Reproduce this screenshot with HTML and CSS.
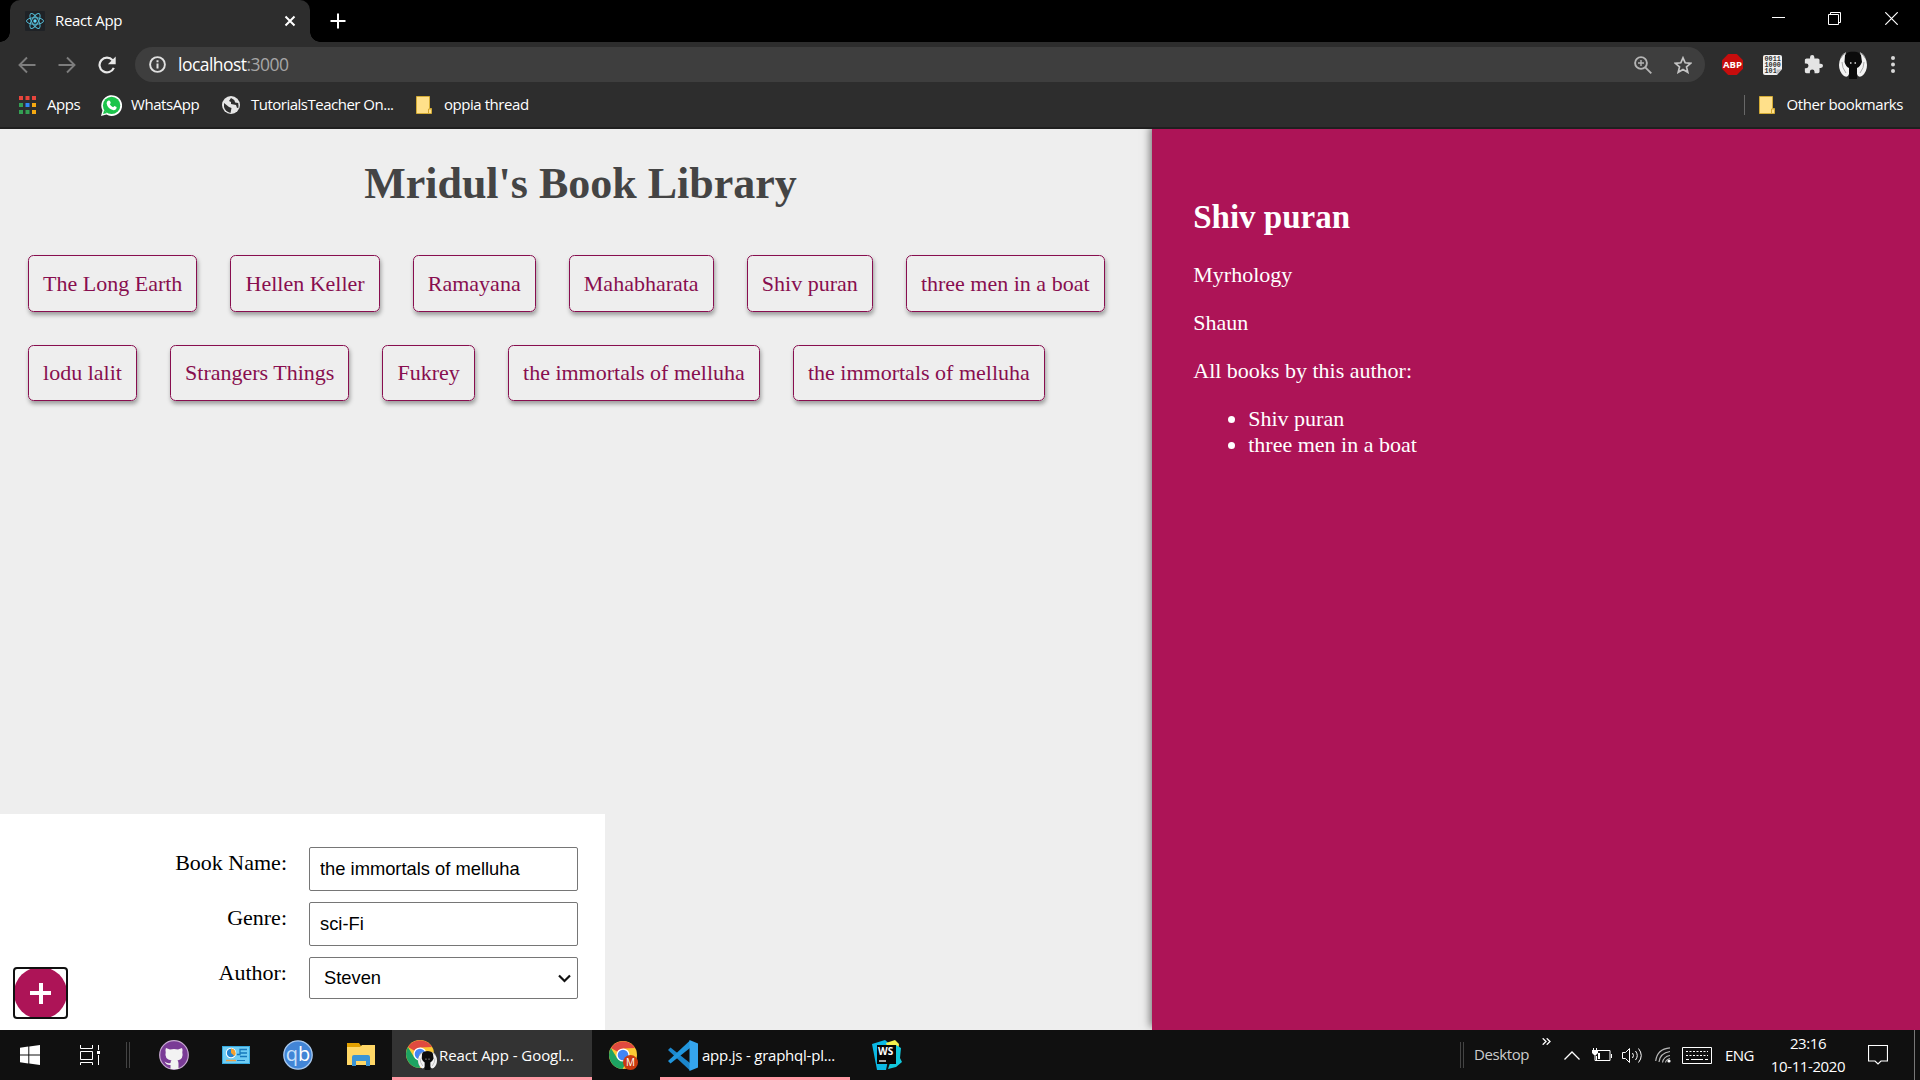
FILE: index.html
```html
<!DOCTYPE html>
<html lang="en">
<head>
<meta charset="utf-8">
<title>React App</title>
<link rel="stylesheet" href="styles.css">
</head>
<body>
<svg class="defs" width="0" height="0" aria-hidden="true">
  <symbol id="chrome" viewBox="0 0 28 28">
    <circle cx="14" cy="14" r="14" fill="#fcc934"/>
    <path d="M14 14 L2 7 A14 14 0 0 1 26.1 7 L14 7.500Z" fill="#e04a3f"/>
    <path d="M1.900 7 A14 14 0 0 0 13.500 28 L20 17 L8 17Z" fill="#1da462"/>
    <circle cx="14" cy="14" r="6.600" fill="#fff"/>
    <circle cx="14" cy="14" r="5.300" fill="#4285f4"/>
  </symbol>
  <symbol id="avatar" viewBox="0 0 28 28">
    <circle cx="14" cy="14" r="14" fill="#2b2b2b"/>
    <path d="M7 2Q0 6 0 14q0 7 5 11 4 2 5-2L10 16 6 11ZM21 2q7 4 7 12 0 7-5 11-4 2-5-2l0-7 4-5Z" fill="#f3f3f3"/>
    <path d="M6 4Q9 0 14 .8 19 0 22 4L23 11Q21 16 18 17V28H10V17Q7 16 5.500 11Z" fill="#0b0b0b"/>
    <path d="M3 11q0 6 4 11M25 11q0 6-4 11M7 1.500Q3 3 2 7M21 1.500Q25 3 26 7" fill="none" stroke="#aaa"/>
    <path d="M11 12h1.500M15.500 12h1.500" stroke="#ddd" stroke-width="1.300"/>
  </symbol>
  <symbol id="folder" viewBox="0 0 16 18">
    <path d="M.5.5h13v12h2v5H.5Z" fill="#ffe08a" stroke="#d3ab35"/>
    <path d="M12.500 17v-4h2.500" fill="none" stroke="#d3a52c"/>
  </symbol>
</svg>

<header class="browser">
  <div class="tab-strip">
    <div class="tab">
      <svg class="tab-icon" width="20" height="20" viewBox="0 0 20 20"><rect width="20" height="20" rx="1" fill="#1f2226"/><g fill="none" stroke="#53b9d3"><ellipse cx="10" cy="10" rx="8.500" ry="3.300"/><ellipse cx="10" cy="10" rx="8.500" ry="3.300" transform="rotate(60 10 10)"/><ellipse cx="10" cy="10" rx="8.500" ry="3.300" transform="rotate(120 10 10)"/></g><circle cx="10" cy="10" r="1.700" fill="#61dafb"/></svg>
      <span class="tab-title">React App</span>
      <svg class="tab-close" width="12" height="12" viewBox="0 0 12 12"><path d="M1.500 1.500l9 9M10.500 1.500l-9 9" stroke="#fff" stroke-width="2"/></svg>
    </div>
    <svg class="new-tab" width="16" height="16" viewBox="0 0 16 16"><path d="M8 .5v15M.5 8h15" stroke="#fff" stroke-width="2"/></svg>
    <div class="window-buttons">
      <svg width="13" height="13" viewBox="0 0 13 13"><path d="M0 5.500h13" stroke="#fff"/></svg>
      <svg width="13" height="13" viewBox="0 0 13 13"><path d="M.5 2.500h10v10H.5zM2.500 2.500v-2h10v10h-2" fill="none" stroke="#fff"/></svg>
      <svg width="13" height="13" viewBox="0 0 13 13"><path d="M.3.3l12.400 12.400M12.700.3L.3 12.700" stroke="#fff" stroke-width="1.200"/></svg>
    </div>
  </div>

  <div class="toolbar">
    <div class="nav-buttons">
      <svg width="18" height="18" viewBox="0 0 18 18"><path d="M17.500 9H1.500M9 1.500L1.500 9 9 16.500" fill="none" stroke="#7d7d7d" stroke-width="1.900"/></svg>
      <svg width="18" height="18" viewBox="0 0 18 18"><path d="M.5 9h16M9 1.500L16.500 9 9 16.500" fill="none" stroke="#7d7d7d" stroke-width="1.900"/></svg>
      <svg width="18" height="18" viewBox="0 0 18 18"><path d="M15.800 11.800A7.400 7.400 0 1 1 14.600 4.200" fill="none" stroke="#e8e8e8" stroke-width="2.200"/><path d="M17.700.5v7.800H9.900Z" fill="#e8e8e8"/></svg>
    </div>
    <div class="address-bar">
      <svg width="17" height="17" viewBox="0 0 17 17"><circle cx="8.500" cy="8.500" r="7.400" fill="none" stroke="#e0e0e0" stroke-width="1.900"/><path d="M8.500 7.500v5M8.500 4.300v1.900" stroke="#e0e0e0" stroke-width="2"/></svg>
      <span class="url">localhost<span class="port">:3000</span></span>
      <div class="address-actions">
        <svg width="18" height="18" viewBox="0 0 18 18"><g fill="none" stroke="#b5b5b5" stroke-width="1.900"><circle cx="7" cy="7" r="5.900"/><path d="M11.300 11.300l6 6"/><path d="M7 4v6M4 7h6" stroke-width="1.400"/></g></svg>
        <svg width="18" height="18" viewBox="0 0 18 18"><path d="M9 1.800l2.200 5 5.500.5-4.200 3.600 1.300 5.400L9 13.400l-4.800 2.900 1.300-5.400L1.300 7.300l5.500-.5Z" fill="none" stroke="#c4c4c4" stroke-width="1.700"/></svg>
      </div>
    </div>
    <div class="extensions">
      <svg width="21" height="21" viewBox="0 0 21 21"><path d="M6.200 0h8.600L21 6.200v8.600L14.800 21H6.200L0 14.800V6.200Z" fill="#c70d0d"/><text class="abp" x="10.500" y="14.200" text-anchor="middle">ABP</text></svg>
      <svg width="19" height="20" viewBox="0 0 19 20"><path d="M2 0h15q2 0 2 2v12l-5 6H2q-2 0-2-2V2q0-2 2-2Z" fill="#efefef"/><g class="bits"><text x="1.500" y="6.300">0011</text><text x="1.500" y="12.300">1000</text><text x="1.500" y="18.300">101</text></g><path d="M13.500 19.500v-5H19" fill="#bbb"/></svg>
      <svg width="19" height="19" viewBox="1 1 22 22"><path d="M20.500 11H19V7c0-1.100-.9-2-2-2h-4V3.500a2.500 2.500 0 0 0-5 0V5H4c-1.100 0-2 .9-2 2v3.800h1.500a2.700 2.700 0 0 1 0 5.400H2V20c0 1.100.9 2 2 2h3.800v-1.500a2.700 2.700 0 0 1 5.400 0V22H17c1.100 0 2-.9 2-2v-4h1.500a2.500 2.500 0 0 0 0-5Z" fill="#e4e4e4"/></svg>
      <svg width="28" height="28"><use href="#avatar"/></svg>
      <svg width="4" height="17" viewBox="0 0 4 17"><g fill="#d8d8d8"><circle cx="2" cy="2" r="2"/><circle cx="2" cy="8.500" r="2"/><circle cx="2" cy="15" r="2"/></g></svg>
    </div>
  </div>

  <nav class="bookmarks">
    <a class="bookmark apps"><svg width="17" height="18" viewBox="0 0 17 18"><path d="M0 0h4v4H0zM6.500 0h4v4h-4zM13 0h4v4h-4z" fill="#e8453c"/><path d="M0 7h4v4H0zM0 14h4v4H0zM6.500 14h4v4h-4z" fill="#34a053"/><path d="M6.500 7h4v4h-4z" fill="#2f86f6"/><path d="M13 7h4v4h-4zM13 14h4v4h-4z" fill="#f5a911"/></svg><span>Apps</span></a>
    <a class="bookmark whatsapp"><svg width="21" height="21" viewBox="0 0 21 21"><path d="M0 21l1.500-5.500A10.400 10.400 0 1 1 5.500 19.600Z" fill="#fff"/><circle cx="10.600" cy="10.400" r="8.700" fill="#1cc44b"/><path d="M2 19l1.200-4 3 3Z" fill="#1cc44b"/><path d="M7.400 5.500l1.500.2.900 2.300-1 1.300q1.200 2.200 3.300 3l1.300-1.400 2.200 1.100q.2 3-3 3.200Q6.500 14 5.600 8.300q.2-2 1.800-2.800Z" fill="#fff"/></svg><span>WhatsApp</span></a>
    <a class="bookmark tutorials"><svg width="18" height="18" viewBox="0 0 18 18"><circle cx="9" cy="9" r="9" fill="#e6e6e6"/><path d="M2 7l5 4 2.500 1-1 5Q3 15.500 2 11ZM9 2l-2 3 2 1v2l5 1 1 3 1.500-.5L16 13q1-3 .2-6l-3-.5-1-2.500Z" fill="#2e2e2e"/></svg><span>TutorialsTeacher On...</span></a>
    <a class="bookmark oppia"><svg width="16" height="18"><use href="#folder"/></svg><span>oppia thread</span></a>
    <a class="bookmark other"><svg width="16" height="18"><use href="#folder"/></svg><span>Other bookmarks</span></a>
  </nav>
</header>

<main class="app">
  <section class="library">
    <h1>Mridul's Book Library</h1>
    <ul class="book-list">
      <li>The Long Earth</li><li>Hellen Keller</li><li>Ramayana</li><li>Mahabharata</li><li>Shiv puran</li><li>three men in a boat</li><li>lodu lalit</li><li>Strangers Things</li><li>Fukrey</li><li>the immortals of melluha</li><li>the immortals of melluha</li>
    </ul>
    <form class="add-book">
      <button class="add-button" type="button" aria-label="Add book"><span></span></button>
      <div class="field"><label for="name">Book Name:</label><input id="name" type="text" value="the immortals of melluha"></div>
      <div class="field"><label for="genre">Genre:</label><input id="genre" type="text" value="sci-Fi"></div>
      <div class="field"><label>Author:</label><div class="select"><span>Steven</span><svg width="13" height="9" viewBox="0 0 13 9"><path d="M1 1.500l5.500 5.500L12 1.500" fill="none" stroke="#111" stroke-width="2.200"/></svg></div></div>
    </form>
  </section>
  <aside class="details">
    <h2>Shiv puran</h2>
    <p>Myrhology</p>
    <p>Shaun</p>
    <p>All books by this author:</p>
    <ul><li>Shiv puran</li><li>three men in a boat</li></ul>
  </aside>
</main>

<footer class="taskbar">
  <div class="slot start"><svg width="20" height="20" viewBox="0 0 20 20"><path d="M0 2.800L8.300 1.600V9.500H0zM9.300 1.400L20 0v9.500H9.300zM0 10.500h8.300v7.900L0 17.200zM9.300 10.500H20V20L9.300 18.600z" fill="#fff"/></svg></div>
  <div class="slot task-view"><svg width="20" height="20" viewBox="0 0 20 20"><path d="M.5 0v3.500h12V0M.5 6.500h12v8H.5zM.5 20v-2.500h12V20M18.500 0v5M18.500 10v10" fill="none" stroke="#fff"/><path d="M17 6h3v3h-3z" fill="#fff"/></svg></div>
  <div class="grip"></div>
  <div class="slot github"><svg width="30" height="30" viewBox="0 0 30 30"><circle cx="15" cy="15" r="14.300" fill="#7a3b96" stroke="#c7a8d2" stroke-width="1.200"/><path d="M7 8l4 1.500q4-1 8 0L23 8q1 2 .3 4.300Q25 19 18.500 20.500q1 1 1 3V29h-8v-4q-4 .5-6-3.500 3 2.500 6 1.500 0-2 1-2.500Q5 19 6.700 12.300 6 10 7 8Z" fill="#f2f2f2"/></svg></div>
  <div class="slot control"><svg width="28" height="18" viewBox="0 0 28 18"><rect x=".5" y=".5" width="27" height="17" fill="#6fcdf4" stroke="#35a9df"/><circle cx="9" cy="7" r="5.200" fill="#fff"/><circle cx="9" cy="7" r="4.200" fill="#2584cf"/><path d="M9 7V2.500A4.500 4.500 0 0 1 12.500 10Z" fill="#f5a12c"/><path d="M15 8.500h3v-5h7M18 7h7M18 10.500h7" fill="none" stroke="#1678bc" stroke-width="1.300"/><path d="M4 14.500h10" stroke="#f0a044" stroke-width="1.500"/><path d="M15 14.500h8" stroke="#1678bc"/></svg></div>
  <div class="slot qb"><svg width="30" height="30" viewBox="0 0 30 30"><circle cx="15" cy="15" r="14.200" fill="#4285d6" stroke="#a9c9ee" stroke-width="1.300"/><text class="qb-text" x="15" y="20.500" text-anchor="middle"><tspan fill="#c8e0fa">q</tspan><tspan fill="#fff">b</tspan></text></svg></div>
  <div class="slot explorer"><svg width="28" height="24" viewBox="0 0 28 24"><path d="M0 0h12l2 3H28v4H0z" fill="#e2a000"/><path d="M0 4h13l2-2h13v20H0z" fill="#ffd766"/><path d="M5 23V14q0-2 2-2h14q2 0 2 2v9h-4v-5H9v5z" fill="#3b94d5"/></svg></div>
  <div class="task active"><svg width="31" height="32" viewBox="0 0 31 32"><use href="#chrome" y="1" width="28" height="28"/><use href="#avatar" x="12" y="12" width="19" height="19"/></svg><span>React App - Googl...</span></div>
  <div class="slot chrome-m"><svg width="29" height="29" viewBox="0 0 29 29"><use href="#chrome" width="28" height="28"/><circle cx="21.500" cy="21.500" r="7.500" fill="#c93a10"/><text class="badge-m" x="21.500" y="25" text-anchor="middle">M</text></svg></div>
  <div class="task code"><svg width="30" height="31" viewBox="0 0 30 31"><path d="M0 10l2.500-2.500L22 23v7.500z" fill="#1c86cc"/><path d="M0 21l2.500 2.500L22 8V.5z" fill="#2196dd"/><path d="M21.500 0L30 3.500v24L21.500 31z" fill="#35a5ee"/></svg><span>app.js - graphql-pl...</span></div>
  <div class="slot webstorm"><svg width="30" height="30" viewBox="0 0 30 30"><path d="M0 4l13-4 6 5-5 25H5z" fill="#0bb9e5"/><path d="M14 3l9-3 4 4-1 9-10-4z" fill="#f5f04d"/><path d="M24 5l5 3-1 10 2 4-6 5-8 2z" fill="#12c8dc"/><path d="M5 5h19v19H5z" fill="#050505"/><text class="ws" x="6" y="15">WS</text><path d="M7 21h7" stroke="#fff" stroke-width="1.300"/></svg></div>
  <div class="tray">
    <div class="grip"></div>
    <span class="desktop">Desktop</span>
    <svg class="more" width="9" height="7" viewBox="0 0 9 7"><path d="M.7.300L4 3.500.7 6.700M4.700.300L8 3.500 4.700 6.700" fill="none" stroke="#fff" stroke-width="1.300"/></svg>
    <svg class="up" width="16" height="9" viewBox="0 0 16 9"><path d="M.5 8.500L8 1l7.500 7.500" fill="none" stroke="#fff" stroke-width="1.300"/></svg>
    <svg class="battery" width="20" height="14" viewBox="0 0 20 14"><path d="M6 2.500h12v10H4.500V8M19.500 6v4M1.500 0v2M4.500 0v2M3 7v5.500h2" fill="none" stroke="#fff"/><path d="M0 2h6v3L4 7H2L0 5zM6 5h2v6H6z" fill="#fff"/></svg>
    <svg class="volume" width="21" height="17" viewBox="0 0 21 17"><path d="M.5 5.500h3l4-4v14l-4-4h-3zM10.500 6q2 2.500 0 5M13.500 4q3.500 4.500 0 9M16.500 1.500q5.500 7 0 14" fill="none" stroke="#fff"/></svg>
    <svg class="wifi" width="16" height="16" viewBox="0 0 16 16"><g fill="none" stroke="#b7b7b7" stroke-width="1.200"><path d="M.7 14Q2 2 15 .8M4 15Q5 6 15 4.500M7.500 15.500q1-6 7.500-7M10.500 15.500q.5-3 4.500-4"/></g><circle cx="14" cy="14" r="1.600" fill="#fff"/></svg>
    <svg class="keyboard" width="30" height="17" viewBox="0 0 30 17"><path d="M.5.5h29v16H.5z" fill="none" stroke="#fff"/><path d="M4 4.500h22M4 8.500h22" stroke="#fff" stroke-dasharray="2 1.500"/><path d="M4 12.500h3M9 12.500h12M23 12.500h3" stroke="#fff"/></svg>
    <span class="lang">ENG</span>
    <div class="clock"><span>23:16</span><span>10-11-2020</span></div>
    <svg class="notify" width="20" height="20" viewBox="0 0 20 20"><path d="M.5.5h19v15.500H13L10 19 7 16H.5z" fill="none" stroke="#fff" stroke-width="1.200"/></svg>
    <div class="show-desktop"></div>
  </div>
</footer>
</body>
</html>
```
FILE: styles.css
```css
* { box-sizing: border-box; }
body {
  margin: 0;
  width: 1920px;
  height: 1080px;
  overflow: hidden;
  display: flex;
  flex-direction: column;
  font-family: "Liberation Serif", "Times New Roman", serif;
  font-size: 22px;
}
svg { display: block; flex: none; }
.defs { position: absolute; }

/* Browser window */
.browser {
  height: 129px;
  flex: none;
  background: #2d2d2d;
  border-bottom: 2px solid #1f1f1f;
  color: #fff;
  font-family: "Open Sans", "Noto Sans", sans-serif;
  font-size: 15px;
}
.tab-strip { height: 42px; background: #000; display: flex; align-items: flex-start; padding-left: 10px; }
.tab {
  width: 300px;
  height: 42px;
  display: flex;
  align-items: center;
  padding: 0 14px 0 15px;
  background: #2d2d2d;
  border-radius: 10px 10px 0 0;
  position: relative;
}
.tab::before, .tab::after {
  content: "";
  position: absolute;
  bottom: 0;
  width: 10px;
  height: 10px;
}
.tab::before { left: -10px; background: radial-gradient(circle at 0 0, #000 9.500px, #2d2d2d 10px); }
.tab::after { right: -10px; background: radial-gradient(circle at 100% 0, #000 9.500px, #2d2d2d 10px); }
.tab-title { margin: 0 0 2px 10px; letter-spacing: -.35px; }
.tab-close { margin-left: auto; }
.new-tab { margin: 13px 0 0 20px; }
.window-buttons { margin: 12px 22px 0 auto; display: flex; gap: 44px; }
.window-buttons svg:first-child { margin-right: -1px; }

.toolbar { height: 45px; display: flex; align-items: center; padding-right: 25px; }
.nav-buttons { display: flex; gap: 22px; padding-left: 18px; width: 135px; flex: none; }
.address-bar {
  width: 1570px;
  height: 35px;
  border-radius: 18px;
  background: #3e3e3e;
  display: flex;
  align-items: center;
  padding: 0 13px 0 14px;
}
.url { margin: 0 0 1px 12px; font-size: 17.500px; letter-spacing: -.53px; }
.port { color: #a6a6a6; }
.address-actions { margin-left: auto; display: flex; gap: 22px; }
.extensions { margin-left: auto; display: flex; align-items: center; gap: 20px; }
.extensions svg:nth-child(3) { margin: 0 -4px 0 2px; }
.extensions svg:nth-child(5) { margin-left: 4px; }
.abp { font: bold 9.500px "Open Sans", sans-serif; fill: #fff; }
.bits { font: bold 6.800px "Liberation Mono", monospace; fill: #333; }

.bookmarks { height: 36px; display: flex; align-items: center; }
.bookmark { display: flex; align-items: center; letter-spacing: -.45px; white-space: nowrap; }
.bookmark span { margin-bottom: 2px; }
.apps { margin-left: 19px; width: 82px; gap: 11px; }
.whatsapp { width: 121px; gap: 9px; }
.tutorials { width: 194px; gap: 11px; letter-spacing: -.5px; }
.oppia, .other { gap: 12px; }
.other { margin: 0 17px 0 auto; padding-left: 15px; position: relative; }
.other::before { content: ""; position: absolute; left: 0; width: 1px; height: 20px; background: #686868; }

/* Library page */
.app { height: 901px; display: flex; flex: none; background: #eee; overflow: hidden; }
.library { width: 1152px; display: flex; flex-direction: column; }
h1 { margin: 30px 0 0 9px; line-height: 50px; font-size: 44px; color: #444; text-align: center; }
.book-list {
  list-style: none;
  margin: 0;
  padding: 46px 0 0 11.500px;
  display: flex;
  flex-wrap: wrap;
  align-content: flex-start;
}
.book-list li {
  margin: 0 16.500px 33px;
  padding: 13.750px 14.080px;
  line-height: 27px;
  border: 1px solid #880e4f;
  border-radius: 5.500px;
  color: #880e4f;
  box-shadow: 1px 3px 4px rgba(0, 0, 0, .35);
}
.add-book {
  width: 605px;
  height: 216px;
  margin-top: auto;
  padding: 33px 27px 0 0;
  background: #fff;
  position: relative;
}
.field { display: grid; grid-template-columns: 287px 269px; column-gap: 22px; height: 55px; }
.field label { text-align: right; line-height: 31px; }
.field input, .select {
  height: 44px;
  width: 269px;
  border: 1px solid #767676;
  border-radius: 2px;
  padding: 0 10px;
  background: #fff;
  color: #000;
  font-family: "Liberation Sans", Arial, sans-serif;
  font-size: 18.333px;
}
.select { height: 42px; display: flex; align-items: center; justify-content: space-between; padding: 0 6px 0 14px; }
.add-button {
  position: absolute;
  left: 13px;
  bottom: 11px;
  width: 55px;
  height: 52px;
  padding: 0;
  border: 2px solid #101010;
  border-radius: 4px;
  background: #fff;
  overflow: hidden;
}
.add-button span {
  display: block;
  width: 53px;
  height: 52px;
  margin: -2px -1px;
  border-radius: 50%;
  background: linear-gradient(#fff, #fff) center / 21px 4px no-repeat, linear-gradient(#fff, #fff) center / 4px 21px no-repeat, #ad1457;
}
.details {
  width: 768px;
  padding: 68px 41.250px 0;
  background: #ad1457;
  color: #fff;
  box-shadow: -2px -3px 8px rgba(0, 0, 0, .5);
}
.details h2 { margin: 0 0 25px; font-size: 33px; line-height: 40px; }
.details p { margin: 0 0 22px; line-height: 26px; }
.details ul { margin: 0; padding-left: 55px; line-height: 26px; }

/* Taskbar */
.taskbar {
  height: 50px;
  flex: none;
  background: #101010;
  color: #fff;
  display: flex;
  font-family: "Open Sans", "Noto Sans", sans-serif;
  font-size: 15px;
}
.slot { display: flex; align-items: center; justify-content: center; width: 62px; }
.start, .task-view { width: 60px; }
.grip { width: 4px; height: 26px; margin: 12px 0 0 6px; border: solid #444; border-width: 0 1px; flex: none; }
.github { margin-left: 13px; }
.explorer { width: 63px; }
.task { display: flex; align-items: center; height: 50px; border-bottom: 3px solid #ff99a4; white-space: nowrap; }
.active { width: 200px; background: #333; padding: 3px 0 0 14px; letter-spacing: -.05px; }
.active span { margin-left: 2px; }
.code { width: 190px; padding: 3px 0 0 8px; letter-spacing: -.22px; }
.code span { margin-left: 4px; }
.chrome-m { width: 68px; padding-right: 5px; }
.webstorm { width: 73px; }
.badge-m { font: 10px "Open Sans", sans-serif; fill: #fff; }
.qb-text { font: 20px "Open Sans", sans-serif; }
.ws { font: bold 10px "Open Sans", sans-serif; fill: #fff; }
.tray { margin-left: auto; width: 460px; display: flex; align-items: center; }
.tray .grip { margin: 0 10px 0 0; }
.desktop { width: 66px; margin-bottom: 2px; color: #ccc; letter-spacing: -.4px; }
.more { margin: -28px 0 0 2px; }
.up { margin-left: 13px; }
.battery { margin-left: 12px; }
.volume { margin-left: 10px; }
.wifi { margin-left: 12px; }
.keyboard { margin-left: 11px; }
.lang { margin-left: 13px; width: 45px; letter-spacing: -.6px; }
.clock { width: 76px; display: flex; flex-direction: column; align-items: center; line-height: 23px; letter-spacing: -.4px; white-space: nowrap; }
.notify { margin-left: 22px; }
.show-desktop { margin-left: auto; width: 6px; height: 50px; border-left: 1px solid #777; }
```
